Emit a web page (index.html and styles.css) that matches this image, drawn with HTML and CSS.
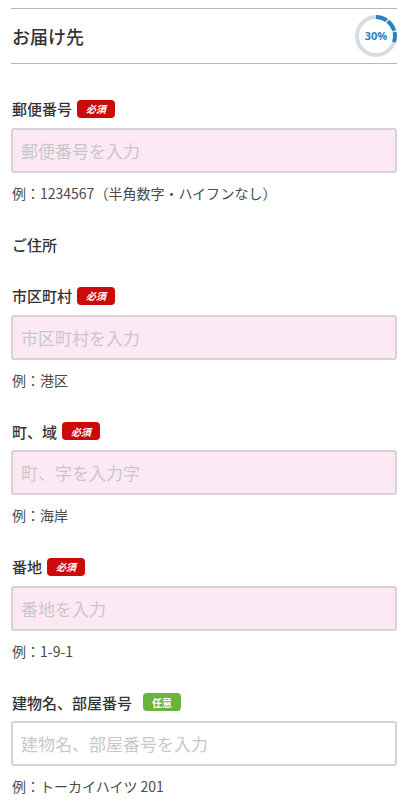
FILE: index.html
```html
<!DOCTYPE html>
<html lang="ja">
<head>
    <meta charset="UTF-8">
    <meta name="viewport" content="width=device-width, initial-scale=1.0">
    <title>お届け先</title>
    <link rel="stylesheet" href="styles.css">
</head>
<body>
    <div class="page">
        <div class="header">
            <h1 class="title">お届け先</h1>
            <div class="progress">
                <svg width="42" height="42" viewBox="0 0 42 42">
                    <circle cx="21" cy="21" r="19" fill="none" stroke="#d6dce1" stroke-width="4"/>
                    <circle cx="21" cy="21" r="19" fill="none" stroke="#2a80c0" stroke-width="4"
                        stroke-dasharray="11.2 1.6 11.2 1.6 10.2 84" transform="rotate(-90 21 21)"/>
                </svg>
                <span class="progress-text">30%</span>
            </div>
        </div>

        <div class="field">
            <div class="label">郵便番号 <span class="badge badge-required">必須</span></div>
            <input class="input input-required" type="text" placeholder="郵便番号を入力">
            <p class="hint">例：1234567（半角数字・ハイフンなし）</p>
        </div>

        <div class="section">ご住所</div>

        <div class="field">
            <div class="label">市区町村 <span class="badge badge-required">必須</span></div>
            <input class="input input-required" type="text" placeholder="市区町村を入力">
            <p class="hint">例：港区</p>
        </div>

        <div class="field">
            <div class="label">町、域 <span class="badge badge-required">必須</span></div>
            <input class="input input-required" type="text" placeholder="町、字を入力字">
            <p class="hint">例：海岸</p>
        </div>

        <div class="field">
            <div class="label">番地 <span class="badge badge-required">必須</span></div>
            <input class="input input-required" type="text" placeholder="番地を入力">
            <p class="hint">例：1-9-1</p>
        </div>

        <div class="field">
            <div class="label">建物名、部屋番号 <span class="badge badge-optional">任意</span></div>
            <input class="input" type="text" placeholder="建物名、部屋番号を入力">
            <p class="hint">例：トーカイハイツ 201</p>
        </div>
    </div>
</body>
</html>
```

FILE: styles.css
```css
* {
    margin: 0;
    padding: 0;
    box-sizing: border-box;
}

body {
    font-family: "Noto Sans CJK JP", "Noto Sans", sans-serif;
    background-color: #fff;
    color: #333;
}

.page {
    padding: 8px 11px 0;
}

.header {
    display: flex;
    align-items: center;
    justify-content: space-between;
    height: 56px;
    border-top: 1px solid #b8b8b8;
    border-bottom: 1px solid #b8b8b8;
    margin-bottom: 33.5px;
}

.title {
    font-size: 18px;
    font-weight: 500;
    padding-left: 1px;
    line-height: 1;
}

.progress {
    position: relative;
    width: 42px;
    height: 42px;
}

.progress svg {
    display: block;
}

.progress-text {
    position: absolute;
    top: 0;
    left: 0;
    width: 42px;
    height: 42px;
    line-height: 42px;
    text-align: center;
    font-family: "Open Sans", sans-serif;
    font-size: 11px;
    font-weight: bold;
    color: #2a80c0;
}

.field {
    margin-bottom: 29.5px;
}

.label,
.section {
    display: flex;
    align-items: center;
    height: 22px;
    font-size: 15px;
    font-weight: 500;
    padding-left: 1px;
}

.section {
    margin-bottom: 29.5px;
}

.label .badge {
    margin-left: 5px;
}

.badge {
    display: inline-flex;
    align-items: center;
    justify-content: center;
    width: 38px;
    height: 18px;
    border-radius: 4px;
    font-size: 10px;
    font-weight: bold;
    font-style: italic;
    color: #fff;
}

.badge-required {
    background-color: #cc0a0a;
}

.badge-optional {
    background-color: #6cb33e;
    font-style: normal;
    margin-left: 11px !important;
}

.input {
    display: block;
    width: 100%;
    height: 45px;
    margin-top: 8px;
    padding: 0 8px;
    border: 2px solid #d6d2d5;
    border-radius: 3px;
    background-color: #fff;
    font-family: inherit;
    font-size: 17px;
    color: #333;
    outline: none;
}

.input-required {
    background-color: #fde9f4;
}

.input::placeholder {
    color: #c8c8c8;
}

.hint {
    margin-top: 10px;
    font-size: 14px;
    line-height: 21px;
    color: #4a4a4a;
    padding-left: 1px;
}
```
